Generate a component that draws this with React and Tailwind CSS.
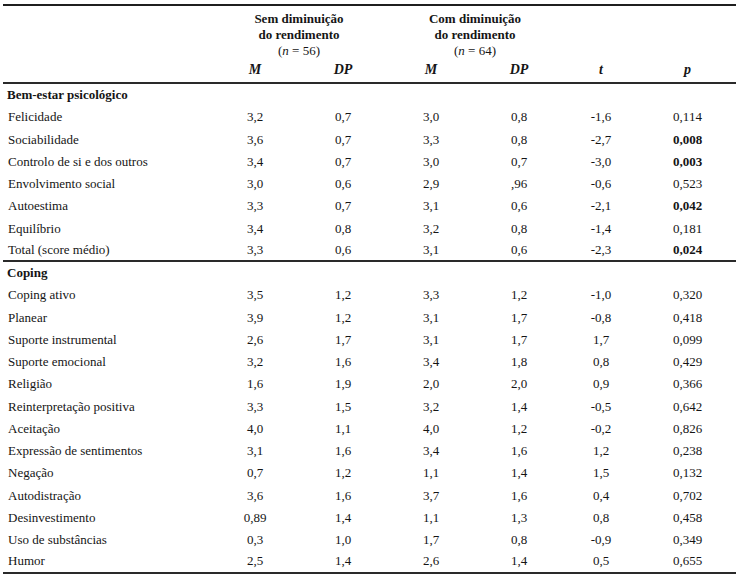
import React from "react";

const cols = "grid grid-cols-[208px_88px_88px_88px_88px_76px_97px]";

const bemEstar = [
  ["Felicidade", "3,2", "0,7", "3,0", "0,8", "-1,6", "0,114"],
  ["Sociabilidade", "3,6", "0,7", "3,3", "0,8", "-2,7", "0,008", true],
  ["Controlo de si e dos outros", "3,4", "0,7", "3,0", "0,7", "-3,0", "0,003", true],
  ["Envolvimento social", "3,0", "0,6", "2,9", ",96", "-0,6", "0,523"],
  ["Autoestima", "3,3", "0,7", "3,1", "0,6", "-2,1", "0,042", true],
  ["Equilíbrio", "3,4", "0,8", "3,2", "0,8", "-1,4", "0,181"],
  ["Total (score médio)", "3,3", "0,6", "3,1", "0,6", "-2,3", "0,024", true],
];

const coping = [
  ["Coping ativo", "3,5", "1,2", "3,3", "1,2", "-1,0", "0,320"],
  ["Planear", "3,9", "1,2", "3,1", "1,7", "-0,8", "0,418"],
  ["Suporte instrumental", "2,6", "1,7", "3,1", "1,7", "1,7", "0,099"],
  ["Suporte emocional", "3,2", "1,6", "3,4", "1,8", "0,8", "0,429"],
  ["Religião", "1,6", "1,9", "2,0", "2,0", "0,9", "0,366"],
  ["Reinterpretação positiva", "3,3", "1,5", "3,2", "1,4", "-0,5", "0,642"],
  ["Aceitação", "4,0", "1,1", "4,0", "1,2", "-0,2", "0,826"],
  ["Expressão de sentimentos", "3,1", "1,6", "3,4", "1,6", "1,2", "0,238"],
  ["Negação", "0,7", "1,2", "1,1", "1,4", "1,5", "0,132"],
  ["Autodistração", "3,6", "1,6", "3,7", "1,6", "0,4", "0,702"],
  ["Desinvestimento", "0,89", "1,4", "1,1", "1,3", "0,8", "0,458"],
  ["Uso de substâncias", "0,3", "1,0", "1,7", "0,8", "-0,9", "0,349"],
  ["Humor", "2,5", "1,4", "2,6", "1,4", "0,5", "0,655"],
];

const Row = ({ r, last }) => (
  <div
    className={
      cols +
      " h-[22.25px] items-center" +
      (last ? " border-b-2 border-[#2a2a2a]" : "")
    }
  >
    <div className="pl-[5px]">{r[0]}</div>
    {r.slice(1, 6).map((v, i) => (
      <div key={i} className="text-center">
        {v}
      </div>
    ))}
    <div className={r[7] ? "text-center font-bold" : "text-center"}>{r[6]}</div>
  </div>
);

const Group = ({ n, title }) => (
  <div className="col-span-2 pt-[5px] text-center font-bold">
    <div>{title}</div>
    <div>do rendimento</div>
    <div className="font-normal">
      (<i>n</i> = {n})
    </div>
  </div>
);

export default function App() {
  return (
    <div className="w-[740px] h-[576px] bg-white pt-[4px] pl-[3px] pr-[4px] font-['Liberation_Serif',serif] text-[13px] leading-[16px] text-[#151515] overflow-hidden">
      <div className="border-t-2 border-[#1f1f1f]">
        {/* Header */}
        <div className={cols}>
          <div />
          <Group title="Sem diminuição" n="56" />
          <Group title="Com diminuição" n="64" />
          <div />
          <div />
        </div>
        <div className={cols + " h-[25px] pt-[3px] border-b-2 border-[#2a2a2a] font-bold italic text-[14px]"}>
          <div />
          <div className="text-center">M</div>
          <div className="text-center">DP</div>
          <div className="text-center">M</div>
          <div className="text-center">DP</div>
          <div className="text-center">t</div>
          <div className="text-center">p</div>
        </div>

        {/* Bem-estar */}
        <div className="h-[22.25px] flex items-center pl-[4px] font-bold">
          Bem-estar psicológico
        </div>
        {bemEstar.map((r, i) => (
          <Row key={r[0]} r={r} last={i === bemEstar.length - 1} />
        ))}

        {/* Coping */}
        <div className="h-[22.25px] flex items-center pl-[4px] font-bold">
          Coping
        </div>
        {coping.map((r, i) => (
          <Row key={r[0]} r={r} last={i === coping.length - 1} />
        ))}
      </div>
    </div>
  );
}
